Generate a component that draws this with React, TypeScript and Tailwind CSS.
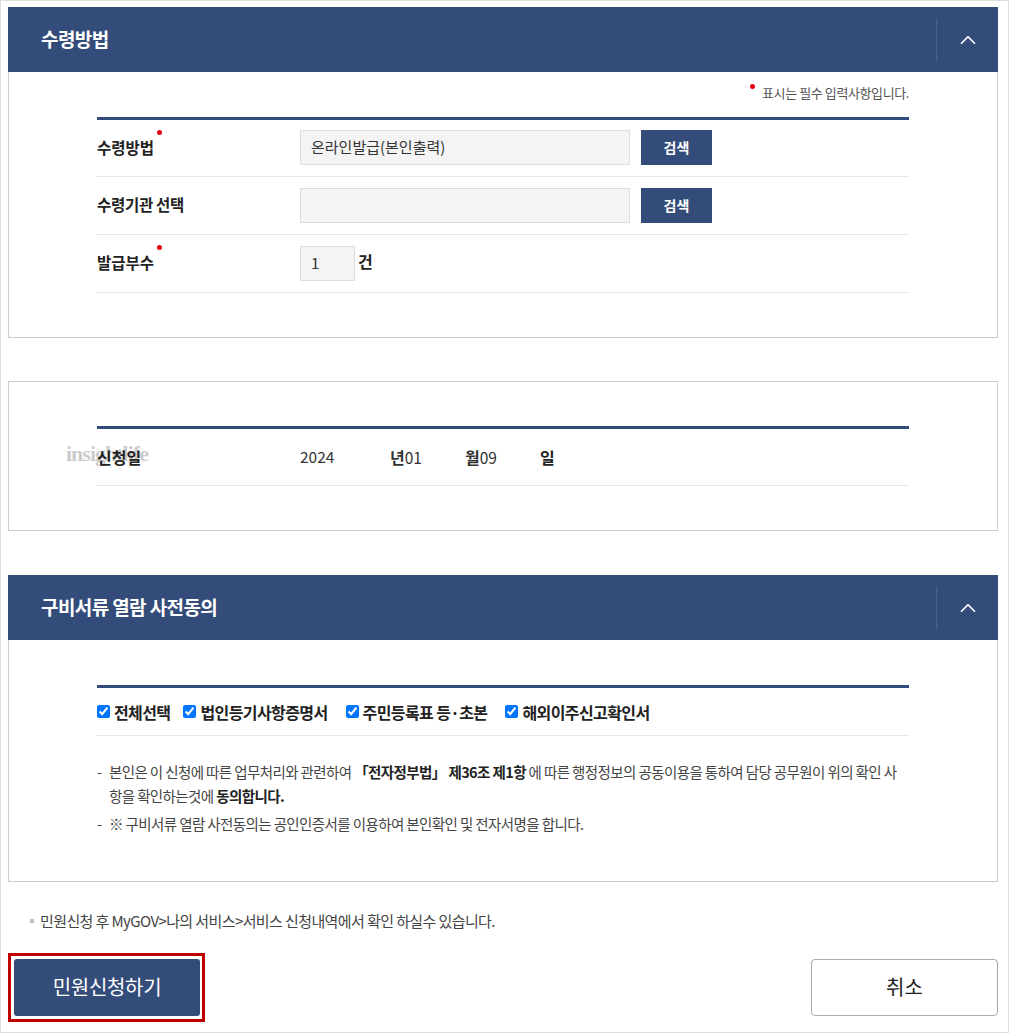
import { ChevronUp } from 'lucide-react';

const font = { fontFamily: '"Noto Sans CJK KR", "Noto Sans", sans-serif' };

function SectionHeader({ title }: { title: string }) {
  return (
    <div className="flex h-[65px] items-center bg-[#344c79] text-white">
      <h2 className="flex-1 pl-[33px] text-[19px] font-bold tracking-[-0.6px]">{title}</h2>
      <div className="h-[42px] w-px bg-[#4a6190]" />
      <div className="flex w-[61px] items-center justify-center">
        <ChevronUp className="h-[26px] w-[26px]" strokeWidth={1.6} />
      </div>
    </div>
  );
}

function Dot() {
  return <span className="absolute -right-[8px] -top-[6px] h-[5px] w-[5px] rounded-full bg-[#e60012]" />;
}

export default function App() {
  return (
    <div style={font} className="h-[1033px] w-[1009px] border border-[#ddd] bg-white pl-[7px] pr-[10px] pt-[6px] text-[#222]">
      {/* 수령방법 */}
      <SectionHeader title="수령방법" />
      <div className="h-[266px] border border-t-0 border-[#ccc] px-[88px] pt-[11px]">
        <p className="relative flex justify-end text-[13px] tracking-[-0.4px] text-[#555]">
          <span className="relative">
            <span className="absolute -left-[12px] top-[1px] h-[5px] w-[5px] rounded-full bg-[#e60012]" />
            표시는 필수 입력사항입니다.
          </span>
        </p>
        <div className="mt-[14px] border-t-[3px] border-[#344c79]">
          <div className="flex h-[57px] items-center border-b border-[#e6e6e6]">
            <div className="w-[203px] text-[15.5px] font-bold">
              <span className="relative">수령방법<Dot /></span>
            </div>
            <div className="flex h-[35px] w-[330px] items-center border border-[#ddd] bg-[#f4f4f4] px-[10px] text-[15px] text-[#333]">
              온라인발급(본인출력)
            </div>
            <button className="ml-[11px] h-[35px] w-[71px] bg-[#344c79] text-[14px] font-bold text-white">검색</button>
          </div>
          <div className="flex h-[58px] items-center border-b border-[#e6e6e6]">
            <div className="w-[203px] text-[15.5px] font-bold tracking-[-0.3px]">수령기관 선택</div>
            <div className="h-[35px] w-[330px] border border-[#ddd] bg-[#f4f4f4]" />
            <button className="ml-[11px] h-[35px] w-[71px] bg-[#344c79] text-[14px] font-bold text-white">검색</button>
          </div>
          <div className="flex h-[58px] items-center border-b border-[#e6e6e6]">
            <div className="w-[203px] text-[15.5px] font-bold">
              <span className="relative">발급부수<Dot /></span>
            </div>
            <div className="flex h-[35px] w-[55px] items-center border border-[#ddd] bg-[#f4f4f4] px-[10px] text-[15px] text-[#333]">1</div>
            <span className="ml-[3px] self-start pt-[14px] text-[16px] font-bold">건</span>
          </div>
        </div>
      </div>

      {/* 신청일 */}
      <div className="mt-[43px] h-[150px] border border-[#ccc] px-[88px] pt-[44px]">
        <div className="border-t-[3px] border-[#344c79]">
          <div className="relative flex h-[57px] items-center border-b border-[#e6e6e6] text-[15.5px]">
            <span
              style={{ fontFamily: '"Liberation Serif", serif' }}
              className="absolute -left-[31px] top-[8px] text-[22px] font-bold tracking-[-1px] text-[#b5b5b5]/70"
            >
              insightlife
            </span>
            <div className="relative w-[203px] text-[16px] font-bold">신청일</div>
            <span className="w-[90px] text-[#333]">2024</span>
            <span className="w-[75px] text-[#333]"><b className="text-[16px]">년</b>01</span>
            <span className="w-[75px] text-[#333]"><b className="text-[16px]">월</b>09</span>
            <b className="text-[16px]">일</b>
          </div>
        </div>
      </div>

      {/* 구비서류 열람 사전동의 */}
      <div className="mt-[44px]">
        <SectionHeader title="구비서류 열람 사전동의" />
        <div className="h-[242px] border border-t-0 border-[#ccc] px-[88px] pt-[45px]">
          <div className="border-t-[3px] border-[#344c79]">
            <div className="flex h-[48px] items-center border-b border-[#e6e6e6] text-[16px] font-bold tracking-[-0.6px]">
              {['전체선택', '법인등기사항증명서', '주민등록표 등·초본', '해외이주신고확인서'].map((t, i) => (
                <label key={t} className={`flex items-center ${i === 0 ? '' : i === 1 ? 'ml-[13px]' : 'ml-[18px]'}`}>
                  <input type="checkbox" checked readOnly className="mr-[4px] h-[13px] w-[13px] accent-[#0075ff]" />
                  {t}
                </label>
              ))}
            </div>
            <div className="pt-[24px] text-[14.5px] leading-[24px] tracking-[-0.6px] text-[#444]">
              <p className="flex">
                <span className="w-[12px] shrink-0">-</span>
                <span>
                  본인은 이 신청에 따른 업무처리와 관련하여 <b className="text-[#222]">「전자정부법」 제36조 제1항</b> 에 따른 행정정보의 공동이용을 통하여 담당 공무원이 위의 확인 사항을 확인하는것에 <b className="text-[#222]">동의합니다.</b>
                </span>
              </p>
              <p className="mt-[4px] flex">
                <span className="w-[12px] shrink-0">-</span>
                <span>※ 구비서류 열람 사전동의는 공인인증서를 이용하여 본인확인 및 전자서명을 합니다.</span>
              </p>
            </div>
          </div>
        </div>
      </div>

      {/* 안내 */}
      <p className="mt-[28px] flex items-center pl-[22px] text-[15px] tracking-[-0.6px] text-[#444]">
        <span className="mr-[6px] h-[4px] w-[4px] bg-[#bbb]" />
        민원신청 후 MyGOV&gt;나의 서비스&gt;서비스 신청내역에서 확인 하실수 있습니다.
      </p>

      {/* 버튼 */}
      <div className="mt-[20px] flex items-center justify-between">
        <div className="border-[3px] border-[#c00000] p-[3px] pr-[2px]">
          <button className="h-[57px] w-[186px] rounded-[3px] bg-[#344c79] text-[20px] tracking-[-0.3px] text-white">민원신청하기</button>
        </div>
        <button className="h-[57px] w-[187px] rounded-[4px] border border-[#aaa] bg-white text-[20px] text-[#222]">취소</button>
      </div>
    </div>
  );
}
